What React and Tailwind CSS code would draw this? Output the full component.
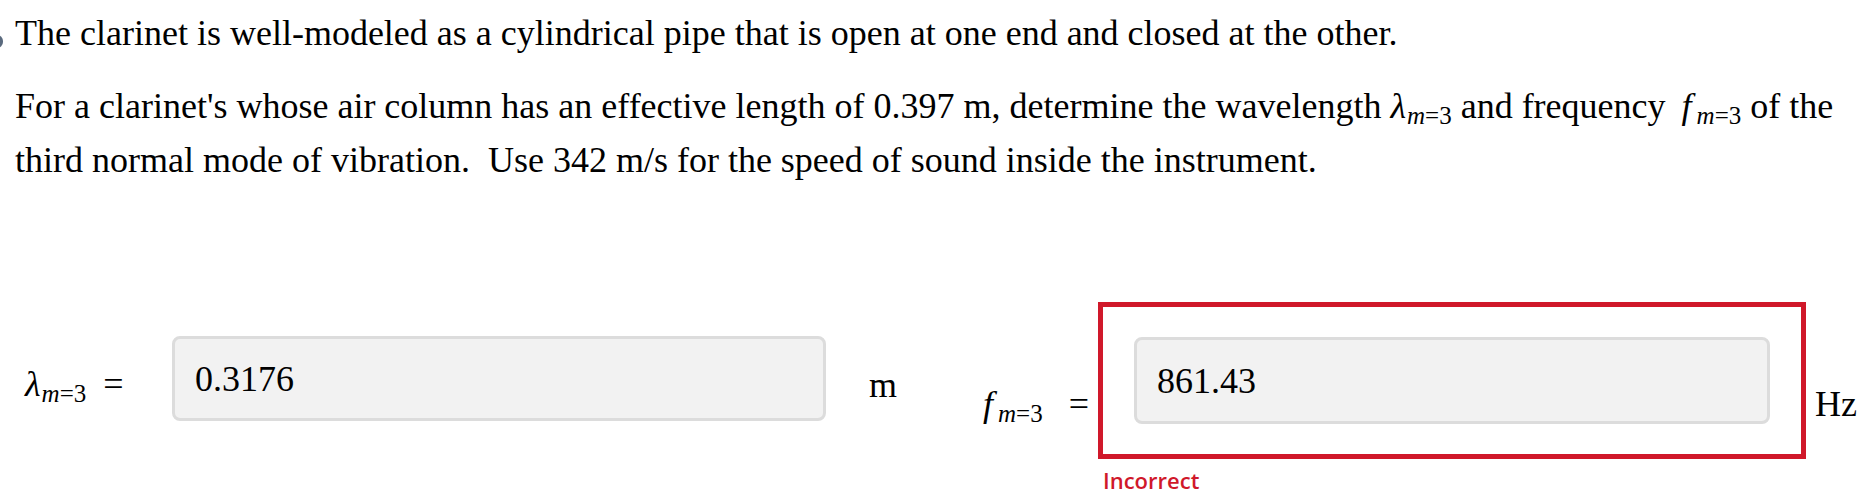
export default function App() {
  const serif = { fontFamily: '"Liberation Serif", "Times New Roman", serif' };

  return (
    <div
      className="relative w-[1868px] h-[494px] bg-white text-black overflow-hidden pl-[15px] pt-[6px]"
      style={serif}
    >
      {/* cut-off step marker on the left edge */}
      <span className="absolute left-[-9px] top-[35px] w-[12px] h-[13px] rounded-full bg-[#5a6a7e]"></span>

      {/* QUESTION TEXT */}
      <p className="text-[36px] leading-[54px]">
        The clarinet is well-modeled as a cylindrical pipe that is open at one end and closed at the other.
      </p>
      <p className="text-[36px] leading-[54px] mt-[19px] whitespace-nowrap">
        For a clarinet's whose air column has an effective length of 0.397 m, determine the wavelength{" "}
        <i>λ</i>
        <span className="text-[25px] leading-none align-[-6px] ml-[1px]">
          <i>m</i>=3
        </span>{" "}
        and frequency <i className="ml-[7px]">f</i>
        <span className="text-[25px] leading-none align-[-6px] ml-[5px]">
          <i>m</i>=3
        </span>{" "}
        of the
        <br />
        third normal mode of vibration.&nbsp; Use 342 m/s for the speed of sound inside the instrument.
      </p>

      {/* ANSWER ROW */}
      <div className="flex items-start mt-[115px]">
        <div className="w-[157px] pl-[10px] mt-[64px] text-[36px] leading-[36px] whitespace-nowrap">
          <i>λ</i>
          <span className="text-[25px] leading-none align-[-6px] ml-[1px]">
            <i>m</i>=3
          </span>
          <span className="ml-[17px]">=</span>
        </div>

        <div className="w-[654px] h-[85px] mt-[34px] flex items-center pl-[20px] bg-[#f2f2f2] border-[3px] border-[#dcdcdc] rounded-[8px] text-[36px] leading-[36px]">
          0.3176
        </div>

        <div className="w-[157px] pl-[43px] mt-[65px] text-[36px] leading-[36px]">m</div>

        <div className="w-[115px] pr-[9px] mt-[84px] flex justify-between items-baseline text-[36px] leading-[36px] whitespace-nowrap">
          <span>
            <i>f</i>
            <span className="text-[25px] leading-none align-[-6px] ml-[5px]">
              <i>m</i>=3
            </span>
          </span>
          <span>=</span>
        </div>

        <div className="flex flex-col">
          <div className="w-[708px] h-[157px] border-[5px] border-[#d0182a] pt-[30px] pl-[31px]">
            <div className="w-[636px] h-[87px] flex items-center pl-[20px] bg-[#f2f2f2] border-[3px] border-[#dcdcdc] rounded-[8px] text-[36px] leading-[36px]">
              861.43
            </div>
          </div>
          <span
            className="ml-[5px] mt-[10px] text-[22px] leading-[22px] font-semibold text-[#d0182a]"
            style={{ fontFamily: '"Open Sans", "Liberation Sans", sans-serif' }}
          >
            Incorrect
          </span>
        </div>

        <div className="ml-[9px] mt-[84px] text-[36px] leading-[36px]">Hz</div>
      </div>
    </div>
  );
}
